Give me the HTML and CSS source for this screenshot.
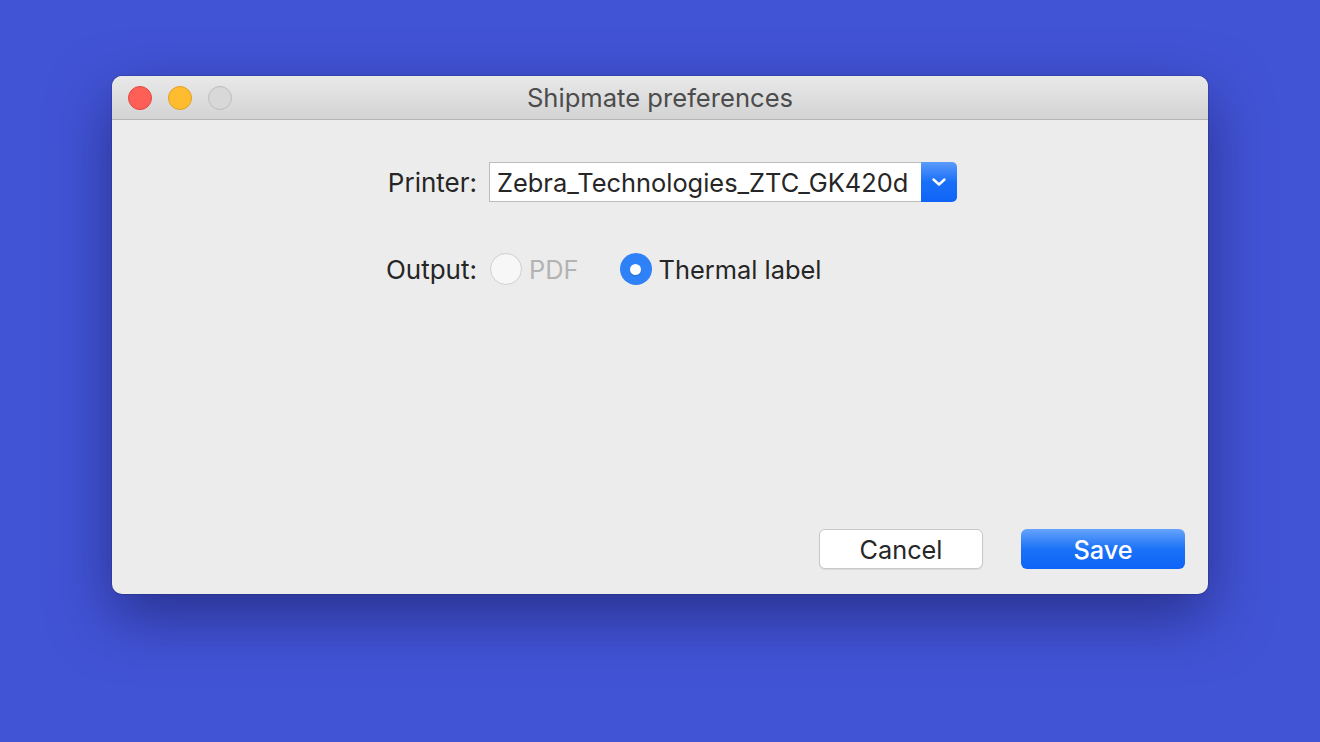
FILE: index.html
```html
<!DOCTYPE html>
<html>
<head>
<meta charset="utf-8">
<link rel="stylesheet" href="styles.css">
</head>
<body>
<div class="window">
  <div class="titlebar">
    <div class="lights">
      <span class="light red"></span>
      <span class="light yellow"></span>
      <span class="light gray"></span>
    </div>
    <div class="title">Shipmate preferences</div>
  </div>
  <div class="content">
    <div class="form">
      <span class="label">Printer:</span>
      <div class="select">
        <span class="select-text">Zebra_Technologies_ZTC_GK420d</span>
        <span class="select-btn">
          <svg width="16" height="10" viewBox="0 0 16 10"><path d="M2.5 2.5 L8 7.5 L13.5 2.5" fill="none" stroke="#fff" stroke-width="2.4" stroke-linecap="round" stroke-linejoin="round"/></svg>
        </span>
      </div>
      <span class="label">Output:</span>
      <div class="radios">
        <span class="radio off"></span>
        <span class="radio-label disabled">PDF</span>
        <span class="radio on"><span class="dot"></span></span>
        <span class="radio-label">Thermal label</span>
      </div>
    </div>
    <div class="actions">
      <button class="btn cancel">Cancel</button>
      <button class="btn save">Save</button>
    </div>
  </div>
</div>
</body>
</html>
```

FILE: styles.css
```css
html, body {
  margin: 0;
  height: 100%;
}
body {
  background: #4254d6;
  font-family: Inter, "Liberation Sans", sans-serif;
  padding: 76px 0 0 112px;
  box-sizing: border-box;
}
.window {
  width: 1096px;
  height: 518px;
  border-radius: 10px;
  background: #ececec;
  overflow: hidden;
  box-shadow: 0 22px 60px rgba(20, 20, 80, 0.55), 0 0 0 1px rgba(0,0,0,0.12);
  display: flex;
  flex-direction: column;
}
.titlebar {
  height: 43px;
  border-bottom: 1px solid #b5b5b5;
  background: linear-gradient(#e9e9e9, #d3d3d3);
  position: relative;
  display: flex;
  align-items: center;
  justify-content: center;
}
.lights {
  position: absolute;
  left: 16px;
  top: 10px;
  display: flex;
  gap: 16px;
}
.light {
  width: 24px;
  height: 24px;
  border-radius: 50%;
  box-sizing: border-box;
  display: block;
}
.red { background: #fe5f57; border: 1px solid #e14640; }
.yellow { background: #febc2e; border: 1px solid #dfa023; }
.gray { background: #d8d8d8; border: 1px solid #bdbdbd; }
.title {
  font-size: 25.6px;
  color: #4c4c4c;
}
.content {
  flex: 1;
  position: relative;
}
.form {
  padding-top: 42px;
  padding-left: 265px;
  display: grid;
  grid-template-columns: 100px auto;
  grid-template-rows: 40px 32px;
  column-gap: 12px;
  row-gap: 51px;
  align-items: center;
  justify-content: start;
}
.label {
  font-size: 26px;
  color: #262626;
  text-align: right;
}
.select {
  display: flex;
  height: 40px;
  width: 468px;
  box-sizing: border-box;
}
.select-text {
  flex: 1;
  background: #fff;
  border: 1px solid #bcbcbc;
  border-right: none;
  font-size: 25.4px;
  color: #262626;
  display: flex;
  align-items: center;
  padding-left: 7px;
}
.select-btn {
  width: 36px;
  background: linear-gradient(#5b9bfb, #1a6ff8 50%, #0f64f7);
  border-radius: 0 5px 5px 0;
  display: flex;
  align-items: center;
  justify-content: center;
}
.radios {
  display: flex;
  align-items: center;
  margin-left: 1px;
}
.radio {
  width: 32px;
  height: 32px;
  border-radius: 50%;
  box-sizing: border-box;
  display: flex;
  align-items: center;
  justify-content: center;
}
.radio.off {
  background: #f7f7f7;
  border: 1px solid #cfcfcf;
}
.radio.on {
  background: #2f81f7;
  margin-left: 41px;
}
.dot {
  width: 11px;
  height: 11px;
  border-radius: 50%;
  background: #fff;
  box-shadow: 0 1px 1px rgba(0,0,0,0.2);
}
.radio-label {
  font-size: 25.4px;
  color: #262626;
  margin-left: 7px;
}
.radio-label.disabled {
  color: #b3b3b3;
}
.actions {
  position: absolute;
  right: 23px;
  bottom: 25px;
  display: flex;
  gap: 38px;
}
.btn {
  width: 164px;
  height: 40px;
  border-radius: 6px;
  font-family: Inter, "Liberation Sans", sans-serif;
  font-size: 25.3px;
  padding: 0;
  cursor: default;
}
.cancel {
  background: #fff;
  border: 1px solid #c8c8c8;
  color: #262626;
  box-shadow: 0 1px 1px rgba(0,0,0,0.08);
}
.save {
  background: linear-gradient(#66a3fb, #1b72f8 50%, #0d63f7);
  border: none;
  color: #fff;
  font-weight: 500;
}
```
